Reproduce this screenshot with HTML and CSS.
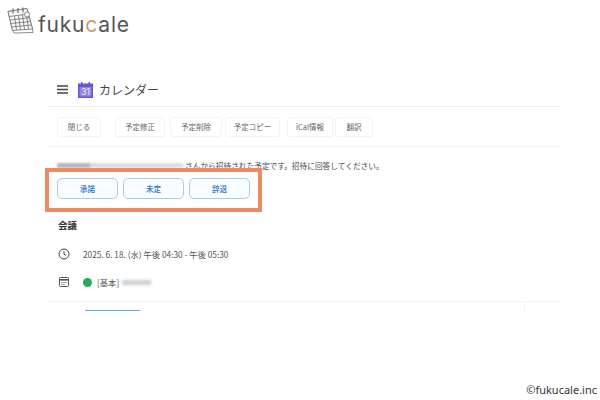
FILE: index.html
```html
<!DOCTYPE html>
<html lang="ja">
<head>
<meta charset="utf-8">
<title>fukucale</title>
<link rel="stylesheet" href="styles.css">
</head>
<body>
<div class="page">
  <header class="brand">
    <svg class="brand-icon" width="27" height="27" viewBox="0 0 27 27" fill="none" stroke="#6e6e6e" stroke-width=".8">
      <path d="M1 4.500 20 1.500 25.500 22 26 25.500 7 26 5.500 23.500Z" fill="#fff"/>
      <path d="M1 4.500 20 1.500 25.500 22 5.500 23.500Z" fill="#f8f8f8"/>
      <path d="M2.500 9.500 21.300 7M3.500 13 22 10.800M4 16.500 23 14.500M5 20 24 18M7.500 9 9.500 23M11.500 8.500 13.500 23M15.500 8 17.500 22.500M19.500 7.500 21.500 22"/>
      <path d="M6 1.500v5M11 1v5M16 .5v5" stroke-width="1.200"/>
      <circle cx="20" cy="7.500" r="2.500" fill="#fff"/>
    </svg>
    <span class="brand-name">fuku<span class="brand-accent">c</span>ale</span>
  </header>

  <main class="app">
    <div class="app-head">
      <svg class="menu-icon" width="11" height="9" viewBox="0 0 11 9"><path d="M0 1h11M0 4.500h11M0 8h11" stroke="#444" stroke-width="1.300"/></svg>
      <svg class="cal-logo" width="15" height="16" viewBox="0 0 15 16">
        <path d="M0 1.500h3V0h1.500v1.500h6V0H12v1.500h3V16H0Z" fill="#6657d6"/>
        <rect x="1.500" y="5" width="12" height="9.500" fill="#8f84e6"/>
        <text class="cal-num" x="7.500" y="13" text-anchor="middle">31</text>
      </svg>
      <span class="app-title">カレンダー</span>
    </div>

    <nav class="toolbar">
      <span class="tool tool-close">閉じる</span>
      <span class="tool tool-edit">予定修正</span>
      <span class="tool tool-del">予定削除</span>
      <span class="tool tool-copy">予定コピー</span>
      <span class="tool tool-ical">iCal情報</span>
      <span class="tool tool-trans">翻訳</span>
    </nav>

    <section class="invite">
      <p class="invite-msg"><span class="blur-name"></span>さんから招待された予定です。招待に回答してください。</p>
      <div class="answers">
        <span class="answer">承諾</span>
        <span class="answer">未定</span>
        <span class="answer">辞退</span>
      </div>
    </section>

    <h1 class="event-title">会議</h1>
    <div class="event-row">
      <svg class="row-icon" width="12" height="12" viewBox="0 0 12 12" fill="none" stroke="#444" stroke-width="1"><circle cx="6" cy="6" r="5"/><path d="M6 3v3.200l2 1.300"/></svg>
      <span>2025. 6. 18. (水) 午後 04:30 - 午後 05:30</span>
    </div>
    <div class="event-row event-row-cal">
      <svg class="row-icon" width="12" height="12" viewBox="0 0 12 12" fill="none" stroke="#555" stroke-width="1"><rect x="1.500" y="1.500" width="9" height="9" rx="1"/><path d="M1.500 3.800h9" stroke-width="1.600"/><path d="M3.500 6.500h1M5.500 6.500h1M7.500 6.500h1M3.500 8.500h1M5.500 8.500h1"/></svg>
      <span class="dot"></span>
      <span>[基本]</span>
      <span class="blur-cal"></span>
    </div>
    <div class="bottom">
      <span class="bottom-bar"></span>
      <span class="bottom-tick"></span>
    </div>
  </main>

  <div class="highlight"></div>
  <footer class="credit">©fukucale.inc</footer>
</div>
</body>
</html>
```
FILE: styles.css
```css
* { box-sizing: border-box; margin: 0; padding: 0; }
html, body { width: 600px; height: 400px; overflow: hidden; background: #fff; }
body { font-family: "Noto Sans CJK JP", "Noto Sans", sans-serif; color: #3c3c3c; }
.page { position: relative; width: 600px; height: 400px; }

.brand { display: flex; align-items: flex-start; gap: 4px; height: 36px; padding: 7px 0 0 7px; }
.brand-icon { flex: none; }
.brand-name { margin-top: 4px; font: 21px/28px "Inter", "Noto Sans", sans-serif; letter-spacing: .8px; color: #555; }
.brand-accent { color: #c99a6c; }

.app { width: 512px; margin: 39px 0 0 48px; }
.app-head { display: flex; align-items: center; height: 32px; padding: 0 0 2px 9px; border-bottom: 1px solid #efefef; }
.menu-icon { flex: none; margin-right: 10px; }
.cal-logo { flex: none; margin-right: 6px; }
.cal-num { font: 8.500px "Inter", sans-serif; fill: #eeecff; }
.app-title { font-size: 12px; line-height: 16px; color: #444; }

.toolbar { display: flex; align-items: center; height: 40px; padding-left: 9px; border-bottom: 1px solid #f2f2f2; }
.tool { display: flex; align-items: center; justify-content: center; height: 20px; border: 1px solid #f4f4f4; border-radius: 3px; font-size: 7.500px; color: #666; white-space: nowrap; }
.tool-close { width: 44px; }
.tool-edit { width: 50px; margin-left: 14px; }
.tool-del { width: 52px; margin-left: 5px; }
.tool-copy { width: 55px; margin-left: 3px; }
.tool-ical { width: 46px; margin-left: 7px; }
.tool-trans { width: 38px; margin-left: 2px; }

.invite { padding: 11px 0 0 10px; }
.invite-msg { display: flex; align-items: center; height: 14px; font-size: 7.700px; color: #4a4a4a; white-space: nowrap; }
.blur-name { flex: none; width: 126px; height: 5px; margin: 0 2px 0 -1px; background: linear-gradient(90deg, #b5b5b5 0 26%, #dcdcdc 26% 100%); filter: blur(1.300px); }
.answers { display: flex; gap: 5px; margin-top: 6px; margin-left: -1px; }
.answer { display: flex; align-items: center; justify-content: center; width: 61px; height: 21px; border: 1px solid #a4cfe8; border-radius: 5px; background: #fafdff; font-size: 7.500px; font-weight: 500; color: #1f78c8; }

.event-title { margin: 18px 0 0 10px; font-size: 9.500px; line-height: 16px; font-weight: 700; color: #333; }
.event-row { display: flex; align-items: center; height: 16px; margin-top: 13px; padding-left: 10px; font-size: 8.300px; color: #555; white-space: nowrap; }
.event-row-cal { margin-top: 12px; }
.row-icon { flex: none; margin-right: 13px; }
.dot { flex: none; width: 9px; height: 9px; margin-right: 5px; border-radius: 50%; background: #1fae5a; }
.blur-cal { width: 29px; height: 5px; margin-left: 3px; background: #d0d0d0; filter: blur(1.500px); }
.bottom { display: flex; align-items: flex-end; justify-content: space-between; height: 10px; margin-top: 11px; padding: 0 35px 0 37px; border-top: 1px solid #f2f2f2; }
.bottom-bar { width: 55px; height: 1px; background: #58b4c8; }
.bottom-tick { width: 1px; height: 8px; background: #efefef; }

.highlight { position: absolute; left: 45px; top: 168px; width: 217px; height: 44px; border: 4px solid #ee8a62; }
.credit { position: absolute; right: 3px; top: 382px; font: 11px/16px "Noto Sans", sans-serif; color: #333; }
```
